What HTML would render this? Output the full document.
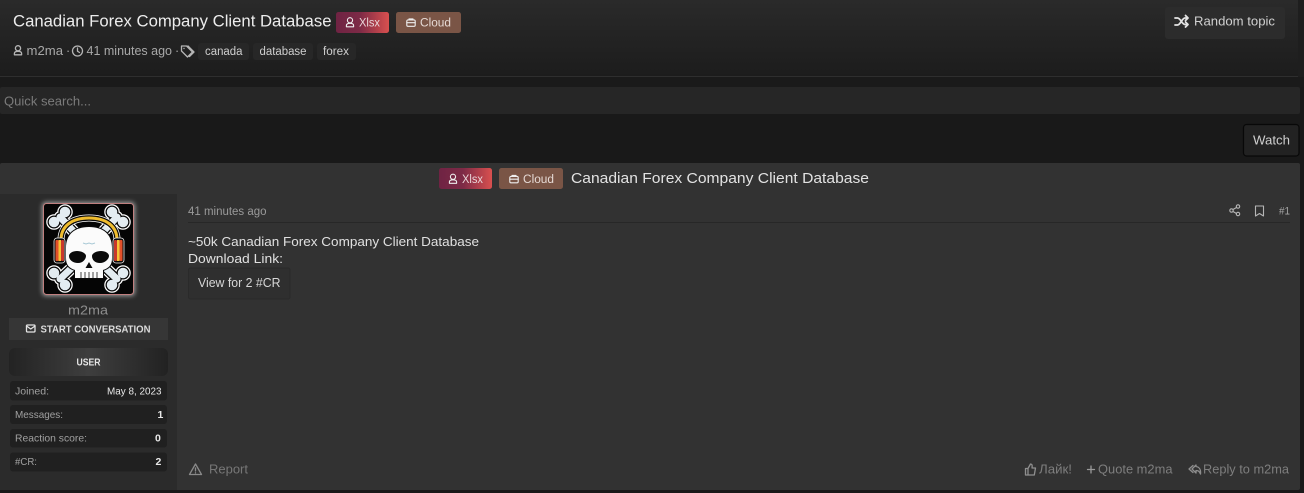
<!DOCTYPE html>
<html><head><meta charset="utf-8"><title>Canadian Forex Company Client Database</title>
<style>
html,body{margin:0;padding:0;background:#191919;width:1304px;height:493px;overflow:hidden}
svg{display:block;filter:blur(.3px)}
text{font-family:"Liberation Sans","DejaVu Sans",sans-serif;fill:#d8d8d8;font-size:12px}
.i{fill:none;stroke:#b5b5b5;stroke-width:1.3;stroke-linecap:round;stroke-linejoin:round}
</style></head><body>
<svg width="1304" height="493" viewBox="0 0 1304 493" xmlns="http://www.w3.org/2000/svg">
<defs>
<linearGradient id="h" x1="0" y1="0" x2="0" y2="1"><stop offset="0" stop-color="#2a2a2a"/><stop offset="1" stop-color="#1c1c1c"/></linearGradient>
<linearGradient id="x" x1="0" y1="0" x2="1" y2="0"><stop offset="0" stop-color="#6f2343"/><stop offset=".45" stop-color="#7d2a46"/><stop offset="1" stop-color="#d9504f"/></linearGradient>
<linearGradient id="u" x1="0" y1="0" x2="1" y2="0"><stop offset="0" stop-color="#232323"/><stop offset=".5" stop-color="#3e3e3e"/><stop offset="1" stop-color="#222"/></linearGradient>
<filter id="glow" x="-20%" y="-20%" width="140%" height="140%"><feGaussianBlur stdDeviation="2.5"/></filter>
<g id="user"><circle cx="0" cy="-2.2" r="2.6"/><path d="M-3.6 4.3v-1.3c0-1.3 1.2-2.2 3.6-2.2s3.6.9 3.6 2.2v1.3z"/></g>
<g id="case"><rect x="-4.2" y="-2.6" width="8.400" height="6.400" rx="1.200"/><path d="M-2 -2.600v-1h4v1M-4.200 .2h8.400"/></g>
<path id="lobes" d="M54 222h.01M65 212h.01M112 212h.01M123 222h.01M54 273h.01M65 285h.01M123 273h.01M112 285h.01"/>
<path id="shafts" d="M60 217L78 236M117 217L99 236M60 279L78 262M117 279L99 262"/>
</defs>

<rect width="1304" height="493" fill="#191919"/>
<!-- header -->
<rect x="0" y="0" width="1304" height="77" fill="url(#h)"/>
<rect x="0" y="76" width="1298" height="1" fill="#2e2e2e"/>
<rect x="1298" y="0" width="6" height="87" fill="#1e1e1e"/>
<rect x="0" y="77" width="1304" height="10" fill="#1a1a1a"/>

<text x="13" y="26.500" style="font-size:17px;fill:#ececec" textLength="318.500" lengthAdjust="spacingAndGlyphs">Canadian Forex Company Client Database</text>

<rect x="336" y="12" width="53" height="21" rx="2.500" fill="url(#x)"/>
<use href="#user" x="350" y="22.500" class="i" style="stroke:#eee;stroke-width:1.100"/>
<text x="359" y="26.500" style="font-size:11.500px;fill:#e9d5d8" textLength="21" lengthAdjust="spacingAndGlyphs">Xlsx</text>
<rect x="396" y="12" width="65" height="21" rx="2.500" fill="#7a5546"/>
<use href="#case" x="411" y="22.500" class="i" style="stroke:#eee;stroke-width:1.100"/>
<text x="420" y="26.500" style="font-size:11.500px;fill:#e6dad5" textLength="31" lengthAdjust="spacingAndGlyphs">Cloud</text>

<!-- meta -->
<use href="#user" x="18" y="50.500" class="i"/>
<text x="26.500" y="55" style="font-size:12.500px;fill:#a8a8a8" textLength="36.500" lengthAdjust="spacingAndGlyphs">m2ma</text>
<text x="66" y="55" style="font-size:12.500px;fill:#a8a8a8">·</text>
<circle cx="77.500" cy="51" r="5" class="i"/><path d="M77.500 48v3.200l2 1.300" class="i"/>
<text x="86.500" y="55" style="font-size:12.500px;fill:#a8a8a8" textLength="85.500" lengthAdjust="spacingAndGlyphs">41 minutes ago</text>
<text x="175" y="55" style="font-size:12.500px;fill:#a8a8a8">·</text>
<path d="M181.500 46v5l6 6 5-5-6-6zM188 46l6 6-4.500 4.500" class="i"/><circle cx="184" cy="48.500" r=".7" fill="#b5b5b5"/>
<rect x="198" y="43" width="51" height="17" rx="3" fill="#272727"/>
<text x="205" y="55" style="font-size:11.500px;fill:#cfcfcf" textLength="37.500" lengthAdjust="spacingAndGlyphs">canada</text>
<rect x="253" y="43" width="60" height="17" rx="3" fill="#272727"/>
<text x="259.500" y="55" style="font-size:11.500px;fill:#cfcfcf" textLength="47" lengthAdjust="spacingAndGlyphs">database</text>
<rect x="317" y="43" width="39" height="17" rx="3" fill="#272727"/>
<text x="323" y="55" style="font-size:11.500px;fill:#cfcfcf" textLength="26" lengthAdjust="spacingAndGlyphs">forex</text>

<!-- random topic -->
<rect x="1165" y="7" width="120" height="32" rx="3" fill="#2c2c2c"/>
<path d="M1175 18h2.500c3 0 4.500 6.500 7.500 6.500h2.500M1175 25h2.500c3 0 4.500-7 7.500-7h2.500M1185.500 15.500l2.500 2.500-2.500 2.500M1185.500 22l2.500 2.500-2.500 2.500" fill="none" stroke="#e4e4e4" stroke-width="1.800" stroke-linecap="round" stroke-linejoin="round"/>
<text x="1194" y="25.500" style="font-size:12.500px;fill:#d0d0d0" textLength="81" lengthAdjust="spacingAndGlyphs">Random topic</text>

<!-- search -->
<rect x="0" y="87" width="1300" height="27" rx="2" fill="#262626"/>
<text x="4" y="105.500" style="font-size:13px;fill:#7b7b7b" textLength="87" lengthAdjust="spacingAndGlyphs">Quick search...</text>

<!-- watch -->
<rect x="1243.500" y="124.500" width="55.500" height="31.500" rx="3" fill="#222" stroke="#080808" stroke-width="1.200"/>
<text x="1253" y="144.500" style="font-size:12.500px;fill:#cfcfcf" textLength="37" lengthAdjust="spacingAndGlyphs">Watch</text>

<!-- main panel -->
<rect x="0" y="163" width="1300" height="327" rx="2" fill="#323232"/>
<rect x="0" y="194" width="177" height="296" fill="#2b2b2b"/>
<rect x="0" y="490" width="1304" height="3" fill="#191919"/>
<path d="M177 226l-5 7 5 7z" fill="#2b2b2b"/>

<rect x="439" y="168" width="53" height="21" rx="2.500" fill="url(#x)"/>
<use href="#user" x="453" y="179" class="i" style="stroke:#eee;stroke-width:1.100"/>
<text x="462" y="183" style="font-size:11.500px;fill:#e9d5d8" textLength="21" lengthAdjust="spacingAndGlyphs">Xlsx</text>
<rect x="499" y="168" width="64" height="21" rx="2.500" fill="#7a5546"/>
<use href="#case" x="514" y="179" class="i" style="stroke:#eee;stroke-width:1.100"/>
<text x="523" y="183" style="font-size:11.500px;fill:#e6dad5" textLength="31" lengthAdjust="spacingAndGlyphs">Cloud</text>
<text x="571" y="183" style="font-size:15px;fill:#e2e2e2" textLength="298" lengthAdjust="spacingAndGlyphs">Canadian Forex Company Client Database</text>

<!-- avatar -->
<rect x="42" y="202" width="93" height="94" rx="4" fill="#fff" opacity=".55" filter="url(#glow)"/>
<rect x="43.500" y="203.500" width="90" height="91" rx="3" fill="#050505" stroke="#c07f7f"/>
<!-- crossbones -->
<g fill="none" stroke-linecap="round">
 <use href="#lobes" stroke="#fff" stroke-width="15.500"/><use href="#shafts" stroke="#fff" stroke-width="12"/>
 <use href="#lobes" stroke="#0a0a0a" stroke-width="13"/><use href="#shafts" stroke="#0a0a0a" stroke-width="9.500"/>
 <use href="#lobes" stroke="#e3ecf1" stroke-width="10.500"/><use href="#shafts" stroke="#e3ecf1" stroke-width="7"/>
</g>
<!-- band -->
<g fill="none">
 <path d="M61 240c0-14 11-22 28-22s28 8 28 22" stroke="#fff" stroke-width="7"/>
 <path d="M61 240c0-14 11-22 28-22s28 8 28 22" stroke="#0a0a0a" stroke-width="5.500"/>
 <path d="M61 240c0-14 11-22 28-22s28 8 28 22" stroke="#efbc2e" stroke-width="3"/>
</g>
<!-- skull -->
<path d="M66 248c0-14 9-21 23-21s23 7 23 21v10c0 7-3 10-9 12v8H75v-8c-6-2-9-5-9-12z" fill="#0a0a0a" stroke="#0a0a0a" stroke-width="2"/>
<path d="M66 248c0-14 9-21 23-21s23 7 23 21v10c0 7-3 10-9 12v8H75v-8c-6-2-9-5-9-12z" fill="#fbfbfb"/>
<path d="M83 243l3 1 3-1 3 1 3-1" fill="none" stroke="#a9c9d6" stroke-width="1"/>
<!-- earcups -->
<rect x="54" y="238" width="11" height="25" rx="3" fill="#0a0a0a" stroke="#eee" stroke-width=".8"/>
<rect x="55.500" y="240" width="3" height="21" rx="1" fill="#e2502a"/><rect x="58.500" y="240" width="2.500" height="21" fill="#f3c337"/><rect x="61" y="240" width="3" height="21" rx="1" fill="#c9382a"/>
<rect x="113" y="238" width="11" height="25" rx="3" fill="#0a0a0a" stroke="#eee" stroke-width=".8"/>
<rect x="114" y="240" width="3" height="21" rx="1" fill="#c9382a"/><rect x="117" y="240" width="2.500" height="21" fill="#f3c337"/><rect x="119.500" y="240" width="3" height="21" rx="1" fill="#e2502a"/>
<!-- face -->
<path d="M69 256c0-3 4-5 8-5s9 2 9 5-3 7-8 7-9-3-9-7zM92 256c0-3 5-5 9-5s8 2 8 5-4 7-9 7-8-3-8-7z" fill="#0a0a0a"/>
<path d="M89 262l3.500 6h-7z" fill="#0a0a0a"/>
<path d="M81 272v6M85 272v6M89 272v6M93 272v6M97 272v6" stroke="#444" stroke-width="1"/>

<!-- sidebar -->
<text x="68" y="314.500" style="font-size:13px;fill:#8e8e8e" textLength="40" lengthAdjust="spacingAndGlyphs">m2ma</text>
<rect x="9" y="318" width="159" height="22" fill="#363636"/>
<rect x="26.500" y="325" width="8.500" height="7" rx="1" class="i" style="stroke:#e4e4e4"/><path d="M26.500 326l4.250 3 4.250-3" class="i" style="stroke:#e4e4e4"/>
<text x="40.500" y="332.500" style="font-size:10.500px;font-weight:bold;fill:#dcdcdc" textLength="110" lengthAdjust="spacingAndGlyphs">START CONVERSATION</text>
<rect x="9" y="348" width="159" height="28" rx="6" fill="url(#u)"/>
<text x="76.500" y="365.500" style="font-size:10.500px;font-weight:bold;fill:#e6e6e6" textLength="24" lengthAdjust="spacingAndGlyphs">USER</text>

<rect x="10" y="381" width="157" height="19.500" rx="3" fill="#202020"/>
<text x="15" y="394.500" style="font-size:10.500px;fill:#a0a0a0" textLength="34" lengthAdjust="spacingAndGlyphs">Joined:</text>
<text x="107" y="394.500" style="font-size:10.500px;fill:#e8e8e8" textLength="54.500" lengthAdjust="spacingAndGlyphs">May 8, 2023</text>
<rect x="10" y="405" width="157" height="19" rx="3" fill="#202020"/>
<text x="15" y="418" style="font-size:10.500px;fill:#a0a0a0" textLength="48" lengthAdjust="spacingAndGlyphs">Messages:</text>
<text x="157.500" y="418" style="font-size:10.500px;font-weight:bold;fill:#e8e8e8">1</text>
<rect x="10" y="429" width="157" height="18.500" rx="3" fill="#202020"/>
<text x="15" y="441.500" style="font-size:10.500px;fill:#a0a0a0" textLength="72" lengthAdjust="spacingAndGlyphs">Reaction score:</text>
<text x="155" y="441.500" style="font-size:10.500px;font-weight:bold;fill:#e8e8e8">0</text>
<rect x="10" y="452.500" width="157" height="19" rx="3" fill="#202020"/>
<text x="15" y="465" style="font-size:10.500px;fill:#a0a0a0" textLength="22" lengthAdjust="spacingAndGlyphs">#CR:</text>
<text x="155.500" y="465" style="font-size:10.500px;font-weight:bold;fill:#e8e8e8">2</text>

<!-- post -->
<text x="188" y="215" style="font-size:11.500px;fill:#9a9a9a" textLength="78.500" lengthAdjust="spacingAndGlyphs">41 minutes ago</text>
<rect x="188" y="222" width="1102" height="1" fill="#272727"/>
<g class="i" style="stroke-width:1.100">
<circle cx="1238" cy="206.500" r="1.700"/><circle cx="1231.500" cy="210.500" r="1.700"/><circle cx="1238" cy="214" r="1.700"/><path d="M1233 209.500l3.500-2M1233 211.500l3.500 2"/>
<path d="M1255.500 206h8v10l-4-2.500-4 2.500z"/>
</g>
<text x="1279" y="214.500" style="font-size:11px;fill:#a5a5a5" textLength="11" lengthAdjust="spacingAndGlyphs">#1</text>

<text x="188" y="246" style="font-size:13px;fill:#e0e0e0" textLength="291" lengthAdjust="spacingAndGlyphs">~50k Canadian Forex Company Client Database</text>
<text x="188" y="263" style="font-size:13px;fill:#e0e0e0" textLength="95" lengthAdjust="spacingAndGlyphs">Download Link:</text>
<rect x="188.500" y="268" width="101.500" height="31" rx="2" fill="#2f2f2f" stroke="#2a2a2a"/>
<text x="198" y="287" style="font-size:12.500px;fill:#d6d6d6" textLength="82.500" lengthAdjust="spacingAndGlyphs">View for 2 #CR</text>

<!-- footer -->
<path d="M195.500 464l6 10.500h-12zM195.500 468v3M195.500 472.800v.2" class="i" style="stroke:#8a8a8a"/>
<text x="209" y="473.500" style="font-size:12.500px;fill:#777" textLength="39" lengthAdjust="spacingAndGlyphs">Report</text>
<g class="i" style="stroke:#8f8f8f">
<path d="M1025.500 468.500h2.500v6.500h-2.500zM1028 468.500l2.500-4.500c1.500 0 2 1 1.500 4h3.500l-1.200 7h-6.300"/>
<path d="M1087.500 469.500h7M1091 466v7" style="stroke:#9a9a9a"/>
<path d="M1193 465.500l-4 3.500 4 3.500M1196 465l-4 4 4 4v-2.500c2.500 0 3.500 1 4.500 3.500.5-4-1-7-4.500-7.500z"/>
</g>
<text x="1039" y="473.500" style="font-size:12.500px;fill:#7e7e7e" textLength="33" lengthAdjust="spacingAndGlyphs">Лайк!</text>
<text x="1098" y="473.500" style="font-size:12.500px;fill:#7e7e7e" textLength="74.500" lengthAdjust="spacingAndGlyphs">Quote m2ma</text>
<text x="1203" y="473.500" style="font-size:12.500px;fill:#7e7e7e" textLength="86" lengthAdjust="spacingAndGlyphs">Reply to m2ma</text>
</svg>
</body></html>
